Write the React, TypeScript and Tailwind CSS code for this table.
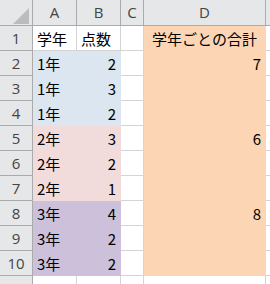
import React from 'react';

type Cell = { text?: string; align?: 'left' | 'right' | 'center'; fill?: string };

const fills = {
  blue: 'bg-[#dce6f1] border-[#dce6f1]',
  pink: 'bg-[#f2dcdb] border-[#f2dcdb]',
  purple: 'bg-[#ccc0da] border-[#ccc0da]',
  orange: 'bg-[#fcd5b4] border-[#fcd5b4]',
};

const rows: { a: string; b: string; d?: string; fill: keyof typeof fills }[] = [
  { a: '1年', b: '2', d: '7', fill: 'blue' },
  { a: '1年', b: '3', fill: 'blue' },
  { a: '1年', b: '2', fill: 'blue' },
  { a: '2年', b: '3', d: '6', fill: 'pink' },
  { a: '2年', b: '2', fill: 'pink' },
  { a: '2年', b: '1', fill: 'pink' },
  { a: '3年', b: '4', d: '8', fill: 'purple' },
  { a: '3年', b: '2', fill: 'purple' },
  { a: '3年', b: '2', fill: 'purple' },
];

const font = "font-['Noto_Sans_CJK_JP',sans-serif]";
const headFont = "font-['Open_Sans','Liberation_Sans',sans-serif]";

function ColHead({ label }: { label: string }) {
  return (
    <div className={`flex items-center justify-center border-r border-b border-[#ababab] bg-[#e6e7e9] text-[15px] text-[#444] ${headFont}`}>
      {label}
    </div>
  );
}

function RowHead({ n }: { n: number | string }) {
  return (
    <div className={`flex items-center justify-center border-r border-b border-[#ababab] bg-[#e6e7e9] text-[15px] text-[#444] ${headFont}`}>
      {n}
    </div>
  );
}

function Cell({ children, cls = 'border-[#d4d4d4] bg-white', align = 'left' }: { children?: React.ReactNode; cls?: string; align?: 'left' | 'right' | 'center' }) {
  const j = align === 'right' ? 'justify-end' : align === 'center' ? 'justify-center' : 'justify-start';
  return (
    <div className={`flex items-center px-[4px] border-r border-b text-[15px] leading-none text-black ${font} ${j} ${cls}`}>
      {children}
    </div>
  );
}

export default function App() {
  return (
    <div className="w-[270px] h-[284px] overflow-hidden bg-white">
      <div className="grid grid-cols-[33px_44px_44px_23px_122px_40px] grid-rows-[26px_repeat(11,25px)]">
        {/* corner with select-all triangle */}
        <div className="relative border-r border-b border-[#ababab] bg-[#e6e7e9]">
          <svg className="absolute left-0 top-0" width="33" height="26">
            <polygon points="29,8 29,24 13,24" fill="#bcbcbc" />
          </svg>
        </div>
        <ColHead label="A" />
        <ColHead label="B" />
        <ColHead label="C" />
        <ColHead label="D" />
        <ColHead label="" />

        {/* header row */}
        <RowHead n={1} />
        <Cell>学年</Cell>
        <Cell>点数</Cell>
        <Cell />
        <Cell cls={fills.orange} align="center">学年ごとの合計</Cell>
        <Cell />

        {rows.map((r, i) => (
          <React.Fragment key={i}>
            <RowHead n={i + 2} />
            <Cell cls={fills[r.fill]}>{r.a}</Cell>
            <Cell cls={fills[r.fill]} align="right">{r.b}</Cell>
            <Cell />
            <Cell cls={fills.orange} align="right">{r.d}</Cell>
            <Cell />
          </React.Fragment>
        ))}

        <RowHead n={11} />
        <Cell />
        <Cell />
        <Cell />
        <Cell />
        <Cell />
      </div>
    </div>
  );
}
